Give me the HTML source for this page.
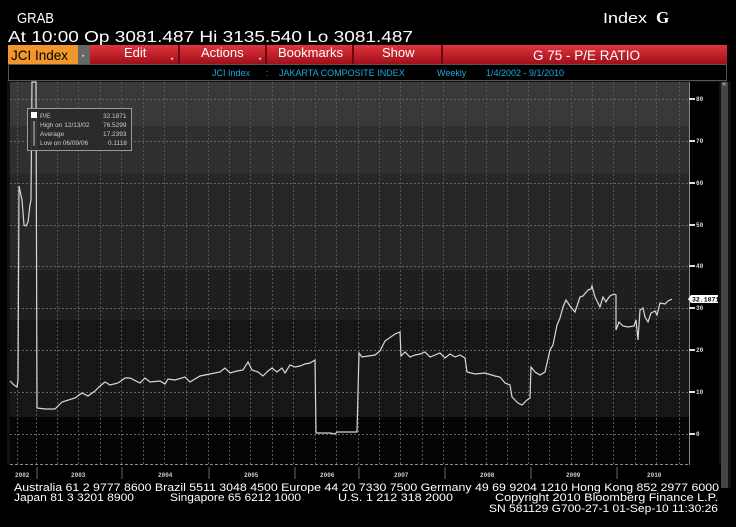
<!DOCTYPE html>
<html><head><meta charset="utf-8"><style>
html,body{margin:0;padding:0;background:#000;width:736px;height:527px;overflow:hidden}
svg{display:block}
</style></head><body>
<svg width="736" height="527" viewBox="0 0 736 527" xmlns="http://www.w3.org/2000/svg" font-family="Liberation Mono, monospace">
<rect width="736" height="527" fill="#000"/>
<text x="17" y="23" fill="#fff" font-size="15" font-family="Liberation Sans Narrow, Liberation Sans, sans-serif" textLength="37" lengthAdjust="spacingAndGlyphs">GRAB</text>
<text x="603" y="23" fill="#fff" font-size="15" font-family="Liberation Sans, sans-serif" textLength="44" lengthAdjust="spacingAndGlyphs">Index</text>
<text x="656" y="23" fill="#fff" font-size="17" font-weight="bold" font-family="Liberation Serif, serif">G</text>
<text x="8" y="42" fill="#fff" font-size="16" font-family="Liberation Sans, sans-serif" textLength="405" lengthAdjust="spacingAndGlyphs">At 10:00  Op 3081.487 Hi 3135.540 Lo 3081.487</text>
<!-- menu bar -->
<defs><linearGradient id="rg" x1="0" y1="0" x2="0" y2="1"><stop offset="0" stop-color="#e0343c"/><stop offset="1" stop-color="#a0101a"/></linearGradient></defs>
<rect x="8" y="45" width="719" height="19" fill="url(#rg)"/>
<rect x="8" y="45" width="70" height="19" fill="#f0962a"/>
<rect x="78" y="45" width="12" height="19" fill="#666"/>
<text x="81" y="58" fill="#ccc" font-size="7">▾</text>
<text x="11" y="60" fill="#000" font-size="14" font-family="Liberation Sans, sans-serif" textLength="57" lengthAdjust="spacingAndGlyphs">JCI Index</text>
<g fill="#6a0a10"><rect x="178" y="45" width="2" height="19"/><rect x="265" y="45" width="2" height="19"/><rect x="352" y="45" width="2" height="19"/><rect x="441" y="45" width="2" height="19"/></g>
<g fill="#fff" font-size="13" font-family="Liberation Sans, sans-serif">
<text x="124" y="57">Edit</text><text x="201" y="57">Actions</text><text x="278" y="57">Bookmarks</text><text x="382" y="57">Show</text>
<text x="533" y="60" font-size="13.5">G 75 - P/E RATIO</text></g>
<g fill="#ddd" font-size="7"><text x="170" y="61">▾</text><text x="258" y="61">▾</text></g>
<!-- info bar -->
<rect x="8.5" y="64.5" width="718" height="16" fill="#000" stroke="#555"/>
<g fill="#1aa8e0" font-size="9" font-family="Liberation Sans Narrow, Liberation Sans, sans-serif">
<text x="212" y="76">JCI Index</text><text x="266" y="76">:</text><text x="279" y="76">JAKARTA COMPOSITE INDEX</text>
<text x="437" y="76">Weekly</text><text x="486" y="76">1/4/2002  -  9/1/2010</text></g>
<!-- chart panel -->
<rect x="7" y="81" width="724" height="407" fill="#111"/>
<rect x="10" y="82" width="679" height="383" fill="#000"/>
<rect x="10" y="82" width="679" height="44" fill="#393939"/>
<rect x="10" y="126" width="679" height="48" fill="#2f2f2f"/>
<rect x="10" y="174" width="679" height="96" fill="#272727"/>
<rect x="10" y="270" width="679" height="50" fill="#1f1f1f"/>
<rect x="10" y="320" width="679" height="97" fill="#171717"/>
<rect x="10" y="417" width="679" height="48" fill="#050505"/>
<rect x="689" y="82" width="30" height="383" fill="#000"/>
<rect x="721" y="82" width="7" height="406" fill="#444"/>
<rect x="7" y="465" width="714" height="23" fill="#000"/>
<!-- grid -->
<g stroke="#666" stroke-width="1" stroke-dasharray="2,2">
<line x1="10" x2="689" y1="434.5" y2="434.5"/><line x1="10" x2="689" y1="392.5" y2="392.5"/>
<line x1="10" x2="689" y1="350.5" y2="350.5"/><line x1="10" x2="689" y1="308.5" y2="308.5"/>
<line x1="10" x2="689" y1="266.5" y2="266.5"/><line x1="10" x2="689" y1="225.5" y2="225.5"/>
<line x1="10" x2="689" y1="183.5" y2="183.5"/><line x1="10" x2="689" y1="141.5" y2="141.5"/>
<line x1="10" x2="689" y1="99.5" y2="99.5"/>
</g>
<g stroke="#555" stroke-width="1" stroke-dasharray="2,2" id="vg">
<line x1="17.5" x2="17.5" y1="82" y2="465"/><line x1="36.5" x2="36.5" y1="82" y2="465"/><line x1="57.5" x2="57.5" y1="82" y2="465"/><line x1="78.5" x2="78.5" y1="82" y2="465"/><line x1="100.5" x2="100.5" y1="82" y2="465"/><line x1="121.5" x2="121.5" y1="82" y2="465"/><line x1="143.5" x2="143.5" y1="82" y2="465"/><line x1="164.5" x2="164.5" y1="82" y2="465"/><line x1="186.5" x2="186.5" y1="82" y2="465"/><line x1="208.5" x2="208.5" y1="82" y2="465"/><line x1="229.5" x2="229.5" y1="82" y2="465"/><line x1="250.5" x2="250.5" y1="82" y2="465"/><line x1="272.5" x2="272.5" y1="82" y2="465"/><line x1="293.5" x2="293.5" y1="82" y2="465"/><line x1="315.5" x2="315.5" y1="82" y2="465"/><line x1="336.5" x2="336.5" y1="82" y2="465"/><line x1="358.5" x2="358.5" y1="82" y2="465"/><line x1="379.5" x2="379.5" y1="82" y2="465"/><line x1="400.5" x2="400.5" y1="82" y2="465"/><line x1="422.5" x2="422.5" y1="82" y2="465"/><line x1="443.5" x2="443.5" y1="82" y2="465"/><line x1="465.5" x2="465.5" y1="82" y2="465"/><line x1="486.5" x2="486.5" y1="82" y2="465"/><line x1="507.5" x2="507.5" y1="82" y2="465"/><line x1="528.5" x2="528.5" y1="82" y2="465"/><line x1="549.5" x2="549.5" y1="82" y2="465"/><line x1="571.5" x2="571.5" y1="82" y2="465"/><line x1="592.5" x2="592.5" y1="82" y2="465"/><line x1="613.5" x2="613.5" y1="82" y2="465"/><line x1="635.5" x2="635.5" y1="82" y2="465"/><line x1="656.5" x2="656.5" y1="82" y2="465"/><line x1="679.5" x2="679.5" y1="82" y2="465"/>
</g>
<line x1="10" x2="689" y1="464.5" y2="464.5" stroke="#888" stroke-dasharray="3,2"/>
<line x1="689.5" x2="689.5" y1="82" y2="465" stroke="#888"/>
<!-- data line -->
<polyline fill="none" stroke="#d8d8d8" stroke-width="1.2" points="10,381 14,385 17,387 18,380 19,186 22,200 24,225 26,226 28,222 30,205 31,200 32,82 36,82 37,408 45,409 55,409 62,402 75,398 82,393 88,396 95,391 100,386 105,382 110,385 118,383 125,378 130,378 140,383 145,378 150,382 160,381 165,384 168,379 175,380 185,377 190,382 200,376 210,374 220,372 225,368 230,373 237,371 243,370 248,362 252,370 258,372 263,376 268,371 272,368 277,372 282,368 285,373 290,365 295,367 300,366 305,364 310,363 315,360 316,433 330,433 335,434 337,432 357,432 359,353 362,357 375,355 380,351 385,341 395,334 400,332 401,356 405,352 410,357 415,355 420,354 425,352 430,357 435,355 440,353 445,358 450,354 455,357 460,355 465,358 467,372 475,374 485,373 495,376 500,377 505,383 510,385 512,397 518,403 522,405 527,400 530,398 531,367 535,372 540,375 545,372 550,350 553,345 557,325 560,318 563,307 566,300 570,306 575,312 578,303 580,297 583,296 588,290 591,289 592,286 595,297 600,307 603,297 606,302 607,300 610,296 614,294 616,295 616,330 619,322 623,326 628,327 634,326 636,320 638,340 640,310 643,308 645,317 648,322 651,313 655,311 657,315 660,303 665,304 668,301 672,299"/>
<!-- legend -->
<rect x="27.5" y="108.5" width="104" height="42" fill="#2a2a2a" fill-opacity="0.9" stroke="#999"/>
<rect x="31" y="112" width="6" height="6" fill="#fff"/>
<g fill="#ccc" font-size="6.5" font-family="Liberation Sans, sans-serif">
<text x="40" y="118">P/E</text><text x="103" y="118">32.1871</text>
<text x="40" y="127">High on 12/13/02</text><text x="103" y="127">76.5299</text>
<text x="40" y="136">Average</text><text x="103" y="136">17.2393</text>
<text x="40" y="145">Low on 06/09/06</text><text x="108" y="145">0.1118</text></g>
<g stroke="#ccc"><line x1="34" x2="34" y1="121" y2="146"/></g>
<!-- right axis -->
<g fill="#ddd" font-size="6" font-weight="bold">
<text x="696" y="101">80</text><text x="696" y="143">70</text><text x="696" y="185">60</text><text x="696" y="227">50</text><text x="696" y="268">40</text><text x="696" y="310">30</text><text x="696" y="352">20</text><text x="696" y="394">10</text><text x="696" y="436">0</text></g>
<g fill="#ddd"><rect x="689" y="98" width="6" height="2"/><rect x="689" y="140" width="6" height="2"/><rect x="689" y="182" width="6" height="2"/><rect x="689" y="224" width="6" height="2"/><rect x="689" y="265" width="6" height="2"/><rect x="689" y="307" width="6" height="2"/><rect x="689" y="349" width="6" height="2"/><rect x="689" y="391" width="6" height="2"/><rect x="689" y="433" width="6" height="2"/></g>
<rect x="691" y="295" width="27" height="8" fill="#fff"/>
<polygon points="688,299 691,295 691,303" fill="#fff"/>
<text x="692" y="301.5" fill="#000" font-size="6.5" font-weight="bold">32.1871</text>
<text x="722" y="86" fill="#ddd" font-size="7">«</text>
<!-- year labels -->
<g stroke="#666"><line x1="37" x2="37" y1="467" y2="479"/><line x1="122" x2="122" y1="467" y2="479"/><line x1="209" x2="209" y1="467" y2="479"/><line x1="295" x2="295" y1="467" y2="479"/><line x1="359" x2="359" y1="467" y2="479"/><line x1="445" x2="445" y1="467" y2="479"/><line x1="531" x2="531" y1="467" y2="479"/><line x1="617" x2="617" y1="467" y2="479"/></g>
<g fill="#ccc" font-size="6" font-weight="bold">
<text x="15" y="477">2002</text><text x="71" y="477">2003</text><text x="158" y="477">2004</text><text x="244" y="477">2005</text><text x="320" y="477">2006</text><text x="394" y="477">2007</text><text x="480" y="477">2008</text><text x="566" y="477">2009</text><text x="647" y="477">2010</text></g>
<!-- footer -->
<g fill="#fff" font-size="11" font-family="Liberation Sans Narrow, Liberation Sans, sans-serif">
<text x="14" y="491" textLength="705" lengthAdjust="spacingAndGlyphs">Australia 61 2 9777 8600 Brazil 5511 3048 4500 Europe 44 20 7330 7500 Germany 49 69 9204 1210 Hong Kong 852 2977 6000</text>
<text x="14" y="501" textLength="120" lengthAdjust="spacingAndGlyphs">Japan 81 3 3201 8900</text>
<text x="170" y="501" textLength="131" lengthAdjust="spacingAndGlyphs">Singapore 65 6212 1000</text>
<text x="338" y="501" textLength="115" lengthAdjust="spacingAndGlyphs">U.S. 1 212 318 2000</text>
<text x="495" y="501" textLength="223" lengthAdjust="spacingAndGlyphs">Copyright 2010 Bloomberg Finance L.P.</text>
<text x="489" y="512" textLength="229" lengthAdjust="spacingAndGlyphs">SN 581129 G700-27-1 01-Sep-10 11:30:26</text></g>
</svg>
</body></html>
